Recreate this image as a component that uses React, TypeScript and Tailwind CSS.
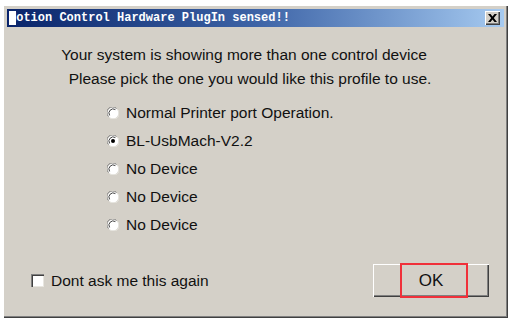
import { useState } from 'react'

const devices = [
  'Normal Printer port Operation.',
  'BL-UsbMach-V2.2',
  'No Device',
  'No Device',
  'No Device',
]

function Radio({ checked }: { checked: boolean }) {
  return (
    <svg width="12" height="12" viewBox="0 0 12 12" className="shrink-0">
      <circle cx="6" cy="6" r="5.5" fill="#ffffff" />
      <path d="M1.5 9.5 A5.5 5.5 0 0 1 9.5 1.5" fill="none" stroke="#808080" strokeWidth="1" />
      <path d="M2.6 8.4 A4.2 4.2 0 0 1 8.4 2.6" fill="none" stroke="#404040" strokeWidth="1" />
      <path d="M10.5 2.5 A5.5 5.5 0 0 1 2.5 10.5" fill="none" stroke="#e8e6e0" strokeWidth="1" />
      {checked && <circle cx="6" cy="6" r="2" fill="#000000" />}
    </svg>
  )
}

export default function App() {
  const [selected, setSelected] = useState(1)
  const [dontAsk, setDontAsk] = useState(false)

  return (
    <div className="w-[510px] h-[319px] bg-white overflow-hidden" style={{ fontFamily: '"Liberation Sans", Arial, sans-serif' }}>
      <div className="ml-[3px] mt-[5px] w-[505px] h-[313px] bg-[#d4d0c8] flex flex-col shadow-[inset_1px_1px_0_#ffffff,inset_-1px_-1px_0_#404040,inset_-2px_-2px_0_#808080]">
        {/* title bar */}
        <div className="mx-[4px] mt-[4px] h-[18px] flex items-center bg-gradient-to-r from-[#0a246a] via-[#3d63a6] via-50% to-[#a6caf0]">
          <span
            className="ml-[2px] text-[12px] font-bold text-white leading-none flex-1 whitespace-nowrap"
            style={{ fontFamily: '"Liberation Mono", "Courier New", monospace' }}
          >
            <span className="bg-white">M</span>otion Control Hardware PlugIn sensed!!
          </span>
          <button className="mr-[4px] w-[15px] h-[14px] bg-[#d4d0c8] flex items-center justify-center shadow-[inset_1px_1px_0_#ffffff,inset_-1px_-1px_0_#404040,inset_-2px_-2px_0_#808080]">
            <svg width="9" height="8" viewBox="0 0 9 8" className="mb-[1px]">
              <path d="M0 0h2.5l2 2.6 2-2.6h2.5l-3.2 4 3.2 4h-2.5l-2-2.6-2 2.6h-2.5l3.2-4z" fill="#000" />
            </svg>
          </button>
        </div>

        {/* message */}
        <div className="mt-[16px] text-center text-[15.5px] leading-[24px] text-[#111]">
          <p className="pr-[23px]">Your system is showing more than one control device</p>
          <p className="pr-[11px]">Please pick the one you would like this profile to use.</p>
        </div>

        {/* device list */}
        <div className="mt-[8px] ml-[104px] flex flex-col">
          {devices.map((d, i) => (
            <label key={i} className="h-[28px] flex items-center gap-[7px] text-[15.5px] text-[#111] cursor-default" onClick={() => setSelected(i)}>
              <Radio checked={selected === i} />
              <span>{d}</span>
            </label>
          ))}
        </div>

        {/* bottom row */}
        <div className="mt-[25px] flex items-center">
          <label className="ml-[28px] flex items-center gap-[7px] text-[15.5px] text-[#111]" onClick={() => setDontAsk(!dontAsk)}>
            <span className="w-[13px] h-[13px] bg-white shadow-[inset_1px_1px_0_#808080,inset_2px_2px_0_#404040,inset_-1px_-1px_0_#e8e6e0]" />
            <span>Dont ask me this again</span>
          </label>
          <div className="ml-auto mr-[19px] relative">
            <button className="w-[116px] h-[33px] bg-[#d4d0c8] text-[17px] text-[#111] shadow-[inset_1px_1px_0_#ffffff,inset_-1px_-1px_0_#404040,inset_-2px_-2px_0_#808080]">
              OK
            </button>
            <div className="absolute left-[27px] top-[-1px] w-[68px] h-[35px] border-2 border-[#f0303a] pointer-events-none" />
          </div>
        </div>
      </div>
    </div>
  )
}
